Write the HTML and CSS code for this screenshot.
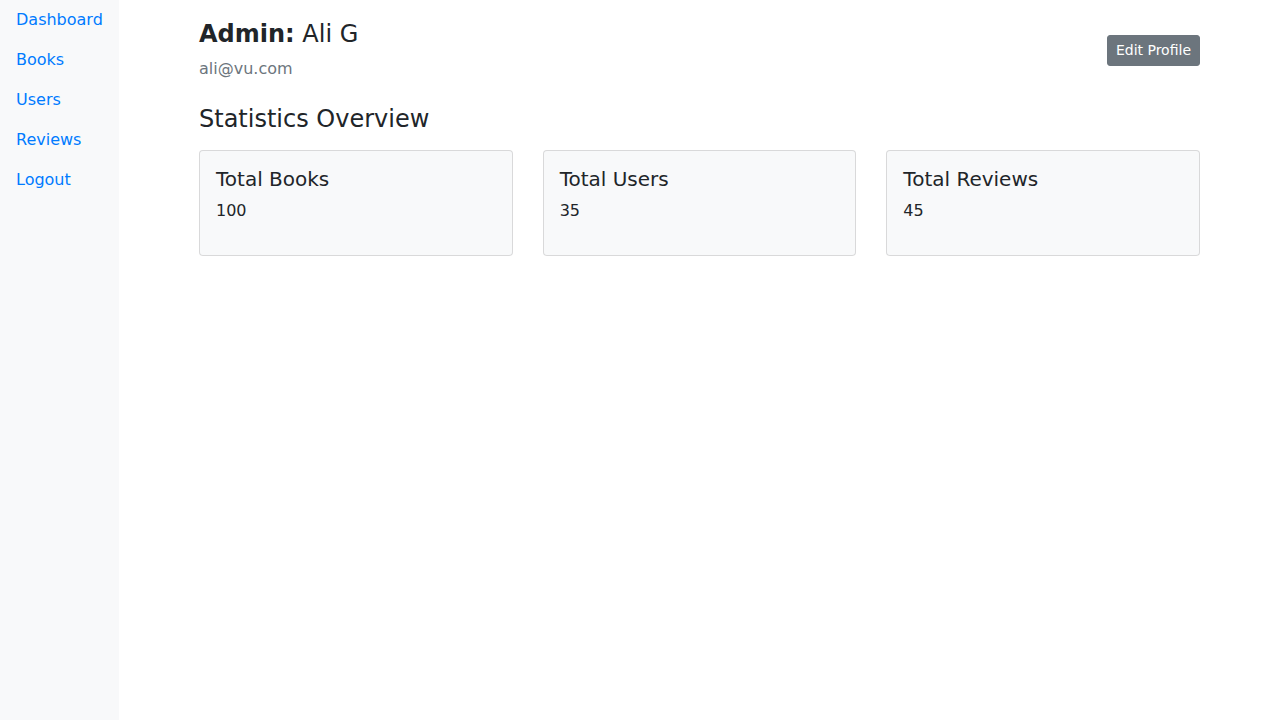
FILE: index.html
```html
<!DOCTYPE html>
<html lang="en">
<head>
<meta charset="utf-8">
<title>Admin Dashboard</title>
<link rel="stylesheet" href="styles.css">
</head>
<body>
<div class="layout">
  <nav class="sidebar">
    <a class="nav-link" href="#">Dashboard</a>
    <a class="nav-link" href="#">Books</a>
    <a class="nav-link" href="#">Users</a>
    <a class="nav-link" href="#">Reviews</a>
    <a class="nav-link" href="#">Logout</a>
  </nav>
  <main class="main">
    <div class="content">
      <div class="profile">
        <div class="profile-info">
          <h4 class="profile-name"><strong>Admin:</strong> Ali G</h4>
          <p class="profile-email">ali@vu.com</p>
        </div>
        <button class="btn">Edit Profile</button>
      </div>
      <h4 class="section-title">Statistics Overview</h4>
      <div class="stats">
        <div class="card">
          <h5 class="card-title">Total Books</h5>
          <p class="card-text">100</p>
        </div>
        <div class="card">
          <h5 class="card-title">Total Users</h5>
          <p class="card-text">35</p>
        </div>
        <div class="card">
          <h5 class="card-title">Total Reviews</h5>
          <p class="card-text">45</p>
        </div>
      </div>
    </div>
  </main>
</div>
</body>
</html>
```
FILE: styles.css
```css
* { box-sizing: border-box; }
html, body {
  margin: 0;
  padding: 0;
  height: 100%;
}
body {
  font-family: "DejaVu Sans", sans-serif;
  font-size: 16px;
  line-height: 1.5;
  color: #212529;
  background: #fff;
}
.layout {
  display: flex;
  min-height: 100%;
}
.sidebar {
  width: 119px;
  flex: 0 0 119px;
  background: #f8f9fa;
  display: flex;
  flex-direction: column;
  min-height: 720px;
}
.nav-link {
  display: block;
  padding: 8px 16px;
  color: #007bff;
  text-decoration: none;
  line-height: 24px;
}
.main {
  flex: 1;
  padding: 20px 80px 0 80px;
}
.content {
  width: 100%;
}
.profile {
  display: flex;
  justify-content: space-between;
  align-items: center;
  margin-bottom: 24px;
}
.profile-name {
  margin: 0 0 8px 0;
  font-size: 24px;
  font-weight: 400;
  line-height: 1.2;
}
.profile-name strong { font-weight: 700; }
.profile-email {
  margin: 0;
  color: #6c757d;
  line-height: 24px;
}
.btn {
  font-family: inherit;
  font-size: 14px;
  line-height: 21px;
  padding: 4px 8px;
  color: #fff;
  background: #6c757d;
  border: 1px solid #6c757d;
  border-radius: 3px;
}
.section-title {
  margin: 0 0 16px 0;
  font-size: 24px;
  font-weight: 400;
  line-height: 1.2;
}
.stats {
  display: grid;
  grid-template-columns: repeat(3, 1fr);
  gap: 30px;
}
.card {
  background: #f8f9fa;
  border: 1px solid rgba(0,0,0,.125);
  border-radius: 4px;
  padding: 16px;
}
.card-title {
  margin: 0 0 8px 0;
  font-size: 20px;
  font-weight: 400;
  line-height: 24px;
}
.card-text {
  margin: 0 0 16px 0;
  line-height: 24px;
}
```
